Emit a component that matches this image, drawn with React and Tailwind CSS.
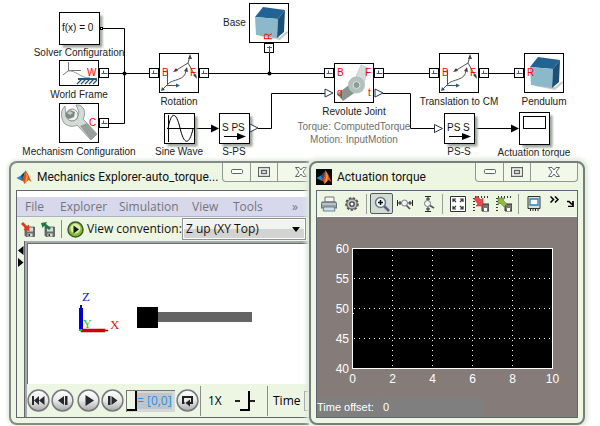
import React from 'react';

const INK = '#000000';
const RED = '#ff0000';

function Label({ x, y, children, fill = '#222222' }) {
  return (
    <text x={x} y={y} fontSize="10" textAnchor="middle" fill={fill}>
      {children}
    </text>
  );
}

function Block({ x, y, w = 39, h = 39, shadow = false }) {
  return (
    <g>
      {shadow && <rect x={x + 3} y={y + 3} width={w} height={h} fill="#9aa39a" filter="url(#soft)" />}
      <rect x={x} y={y} width={w} height={h} fill="#ffffff" stroke={INK} />
    </g>
  );
}

function Port({ x, y }) {
  return (
    <g>
      <rect x={x} y={y} width="9" height="9" fill="#ffffff" stroke={INK} />
      <path d={`M${x + 2} ${y + 5}h6M${x + 4} ${y + 2}v3`} stroke="#44597a" fill="none" />
    </g>
  );
}

function OpenArrow({ x, y }) {
  return <path d={`M${x} ${y - 4}L${x + 8} ${y}L${x} ${y + 4}Z`} fill="#ffffff" stroke="#2b3550" />;
}

function Transform({ x, y }) {
  return (
    <g fill="none">
      <path d={`M${x + 8.5} ${y + 17}v15.500h11M${x + 8} ${y + 32}l-5 5`} stroke="#2d587f" />
      <path d={`M${x + 21} ${y + 32.5}l-4 -2v4zM${x + 2} ${y + 38}l1 -4l3 3z`} fill="#2d587f" />
      <path d={`M${x + 9} ${y + 31}C${x + 13} ${y + 26} ${x + 27} ${y + 28} ${x + 27} ${y + 17}`} stroke="#555555" />
      <path d={`M${x + 28} ${y + 14}l-3 4l4 1z`} fill="#444444" />
      <path d={`M${x + 16} ${y + 18}L${x + 29} ${y + 10}L${x + 31} ${y + 3}M${x + 29} ${y + 10}L${x + 37} ${y + 24}`} stroke="#555555" />
      <path d={`M${x + 14} ${y + 19}l3 -4l2 3zM${x + 31} ${y + 1}l-2 5l4 0zM${x + 38} ${y + 26}l-4 -4l3 -1z`} fill="#444444" />
    </g>
  );
}

function Cube({ x, y }) {
  return (
    <g>
      <path d={`M${x + 3} ${y + 25}l22 5l7 -6l1 2l-8 7l-20 -4z`} fill="#c8cdc8" />
      <path d={`M${x} ${y + 10}L${x + 8} ${y}L${x + 30} ${y + 3}L${x + 23} ${y + 12}Z`} fill="#236394" />
      <path d={`M${x} ${y + 10}L${x + 23} ${y + 12}L${x + 22} ${y + 31}L${x + 1} ${y + 28}Z`} fill="#8bb9c9" />
      <path d={`M${x + 23} ${y + 12}L${x + 30} ${y + 3}L${x + 29} ${y + 25}L${x + 22} ${y + 31}Z`} fill="#1b5078" />
    </g>
  );
}

function Diagram() {
  return (
    <svg viewBox="0 0 600 161" className="block w-full" fontFamily='"Liberation Sans", Arial, sans-serif' role="img" aria-label="Block diagram">
      <defs>
        <filter id="soft" x="-20%" y="-20%" width="150%" height="150%">
          <feGaussianBlur stdDeviation="1.3" />
        </filter>
      </defs>

      <g fill="none" stroke={INK}>
        <path d="M103 28.5H124.5V123.5H104M104 73.5H154" />
        <path d="M204 73.5H329M269.5 48V73" />
        <path d="M379 73.5H434M484 73.5H519" />
        <path d="M195 128.5H213M258 128.5H271.5V93.5H325" />
        <path d="M383 93.5H410.5V128.5H434M475 128.5H512" />
      </g>
      <circle cx="124.5" cy="73.5" r="2" />
      <circle cx="269.5" cy="73.5" r="2" />
      <path d="M211 124.500L219 128.500L211 132.500ZM511 124.500L519 128.500L511 132.500Z" />

      <Block x={59.5} y={12.5} w={40} h={32} shadow />
      <rect x="100.500" y="27.500" width="2" height="2" fill="#ffffff" stroke={INK} />
      <text x="62" y="31" fontSize="10" fill="#111111">f(x) = 0</text>
      <Label x={79} y={56}>Solver Configuration</Label>

      <Block x={59.5} y={60.5} h={25} />
      <path d="M68.500 62V71M68 70.500H81M68 71L63 75" stroke="#777777" fill="none" />
      <path d="M68 71C76 70 80 78 90 78" stroke="#999999" fill="none" />
      <path d="M78 79H97" stroke="#24547c" strokeWidth="2" />
      <path d="M82 79L77 84M86 79L81 84M90 79L85 84M94 79L89 84M97 80L93 84" stroke="#24547c" strokeWidth="1.300" />
      <text x="87" y="76" fontSize="10" fill={RED}>W</text>
      <Port x={99.5} y={68.5} />
      <Label x={79} y={98}>World Frame</Label>

      <Block x={59.5} y={103.5} />
      <path d="M65 106C61 109 60 117 64 123C68 127 74 127 77 125L91 140L97 134L83 119C86 114 85 107 79 105L76 105L79 112L77 119L71 121L66 117Z" fill="#d3dcd6" stroke="#7f8985" strokeWidth="0.800" />
      <path d="M80 126L91 140L97 134L87 123Z" fill="#989f9d" />
      <circle cx="72" cy="115" r="6" fill="#eef1ee" stroke="#8b9491" />
      <path d="M66 113L70 110L75 112L74 117L69 119L66 117Z" fill="#7f8784" />
      <path d="M67 113L70 111L73 113L70 115Z" fill="#c5cbc7" />
      <text x="89" y="126" fontSize="10" fill={RED}>C</text>
      <Port x={99.5} y={118.5} />
      <Label x={79} y={155}>Mechanism Configuration</Label>

      <Block x={159.5} y={53.5} />
      <Transform x={159} y={53} />
      <text x="162" y="76" fontSize="10" fill={RED}>B</text>
      <text x="190" y="76" fontSize="10" fill={RED}>F</text>
      <Port x={149.5} y={68.5} />
      <Port x={199.5} y={68.5} />
      <Label x={179} y={105}>Rotation</Label>

      <Label x={234.5} y={26}>Base</Label>
      <Block x={249.5} y={3.5} />
      <Cube x={255} y={7} />
      <text x="0" y="0" fontSize="10" fill={RED} transform="translate(272 40) rotate(-90)">R</text>
      <rect x="264.500" y="43.500" width="9" height="9" fill="#ffffff" stroke={INK} />
      <path d="M269.500 46V53M267 47.500H272" stroke="#44597a" />

      <Block x={334.5} y={63.5} />
      <path d="M361 65L368 68L363 87L353 83Z" fill="#d4ded9" stroke="#a9b7b1" strokeWidth="0.500" />
      <path d="M337 94L353 82L360 89L343 101Z" fill="#87958f" />
      <circle cx="356.500" cy="85" r="8.500" fill="#b3c0bb" />
      <circle cx="356.500" cy="85" r="3.500" fill="#8d9c98" stroke="#dce4e0" />
      <text x="337" y="76" fontSize="10" fill={RED}>B</text>
      <text x="365" y="76" fontSize="10" fill={RED}>F</text>
      <text x="337" y="96" fontSize="10" fill={RED}>q</text>
      <text x="368" y="96" fontSize="10" fill={RED}>t</text>
      <Port x={324.5} y={68.5} />
      <Port x={374.5} y={68.5} />
      <OpenArrow x={325} y={93} />
      <OpenArrow x={375} y={93} />
      <Label x={354} y={115}>Revolute Joint</Label>
      <Label x={354} y={130} fill="#707070">Torque: ComputedTorque</Label>
      <Label x={354} y={143} fill="#707070">Motion: InputMotion</Label>

      <Block x={439.5} y={53.5} />
      <Transform x={439} y={53} />
      <text x="442" y="76" fontSize="10" fill={RED}>B</text>
      <text x="470" y="76" fontSize="10" fill={RED}>F</text>
      <Port x={429.5} y={68.5} />
      <Port x={479.5} y={68.5} />
      <Label x={459} y={105}>Translation to CM</Label>

      <Block x={524.5} y={53.5} />
      <Cube x={530} y={57} />
      <text x="527" y="76" fontSize="10" fill={RED}>R</text>
      <Port x={514.5} y={68.5} />
      <Label x={544} y={105}>Pendulum</Label>

      <Block x={164.5} y={113.5} w={30} h={30} shadow />
      <path d="M168.500 115V142M167 128.500H195" stroke={INK} />
      <path d="M168 129C171 111 176 111 180 128S189 146 193 129" fill="none" stroke={INK} />
      <Label x={179} y={155}>Sine Wave</Label>

      <Block x={219.5} y={113.5} w={30} h={30} shadow />
      <text x="222" y="131" fontSize="10" fill="#111111">S PS</text>
      <path d="M224 136.500H239" stroke={INK} />
      <path d="M237 133L246 136.500L237 140Z" />
      <OpenArrow x={250} y={128} />
      <Label x={234} y={155}>S-PS</Label>

      <Block x={444.5} y={113.5} w={30} h={30} shadow />
      <text x="447" y="131" fontSize="10" fill="#111111">PS S</text>
      <path d="M449 136.500H464" stroke={INK} />
      <path d="M462 133L471 136.500L462 140Z" />
      <OpenArrow x={434.5} y={128.5} />
      <Label x={459} y={155}>PS-S</Label>

      <Block x={519.5} y={112.5} w={30} h={32} shadow />
      <rect x="523.500" y="116.500" width="22" height="12" fill="#ffffff" stroke={INK} />
      <Label x={534} y={156}>Actuation torque</Label>
    </svg>
  );
}

function Logo({ boxed }) {
  return (
    <svg viewBox="0 0 16 16" className="h-4 w-4 shrink-0" aria-hidden="true">
      {boxed && <rect width="16" height="16" fill="#070707" />}
      <path d="M0.500 9L5 6.500L9 2.500L7 10L5 11.500Z" fill="#2e83c0" />
      <path d="M5 6.500L9 2.500L7.500 8L6 10Z" fill="#174a79" />
      <path d="M5 11.500L7.500 8.500L9.500 1L12 5L15.500 13L12.500 11L8.500 15L7 12Z" fill="#d7551c" />
      <path d="M9.500 2L10.500 7L8.500 15L11 12L12 7Z" fill="#f7a23b" />
      <path d="M9.500 2L8 8L5.500 11.500L7 11Z" fill="#7b2015" />
    </svg>
  );
}

function CaptionButtons() {
  const cell = 'flex h-[18px] items-center justify-center border-[#8f9793]';
  return (
    <div className="flex shrink-0 self-start overflow-hidden rounded-b-[4px] border border-t-0 border-[#8f9793] bg-[#f2f9ea]">
      <button aria-label="Minimize" className={`${cell} w-[28px] border-r`}>
        <svg viewBox="0 0 12 6" className="h-[6px] w-3"><rect x=".5" y=".5" width="11" height="4" rx="1" fill="#fff" stroke="#5b6663" /></svg>
      </button>
      <button aria-label="Maximize" className={`${cell} w-[27px] border-r`}>
        <svg viewBox="0 0 12 10" className="h-[10px] w-3"><path d="M.5.5h11v9H.5zM3.500 3.500h5v3h-5z" fill="#fff" stroke="#5b6663" strokeWidth="1.300" /></svg>
      </button>
      <button aria-label="Close" className={`${cell} w-[46px]`}>
        <svg viewBox="0 0 12 10" className="h-[10px] w-3"><path d="M.5.5H4L6 3L8 .5H11.500L8 5L11.500 9.500H8L6 7L4 9.500H.5L4 5Z" fill="#fff" stroke="#5b6663" /></svg>
      </button>
    </div>
  );
}

function SaveIcon({ green }) {
  return (
    <svg viewBox="0 0 14 15" className="h-[15px] w-[14px]" aria-hidden="true">
      <path d="M4 5h9.500v9.500H5L4 13.500z" fill="#6b6e70" stroke="#44474a" strokeWidth=".7" />
      <path d="M6 5.500h6v4H6zM6.500 11.500h5v3h-5z" fill="#d6d9da" />
      <path d="M7.500 12h1.500v2h-1.500z" fill="#333" />
      {green ? (
        <path d="M0 1L6 0L5 2L10 6L8 8L3 4L1.500 6Z" fill="#177c47" />
      ) : (
        <path d="M0 2L2 0L6 4L8 2.500L8.500 9L2.500 8L4 6Z" fill="#dc3c20" />
      )}
    </svg>
  );
}

const glyphs = {
  first: <path d="M5 7h2v9H5zM12 7v9l-5-4.500zM17.500 7v9L12 11.500z" />,
  back: <path d="M13 7v9l-6-4.500zM14 7h2.500v9H14z" />,
  play: <path d="M8.500 6v11l8.500-5.500z" />,
  forward: <path d="M7 7h2.500v9H7zM10.500 7v9l6-4.500z" />,
  loop: <path d="M8.500 14H7V8h9v6h-3" fill="none" stroke="#222" strokeWidth="2" />,
};

function RoundButton({ kind, label }) {
  return (
    <button aria-label={label} className="h-[23px] w-[23px] shrink-0">
      <svg viewBox="0 0 23 23" className="h-full w-full">
        <defs>
          <linearGradient id={`g-${kind}`} x1="0" y1="0" x2="0" y2="1">
            <stop offset="0" stopColor="#ffffff" />
            <stop offset=".5" stopColor="#e9e9e9" />
            <stop offset="1" stopColor="#a9a9a9" />
          </linearGradient>
        </defs>
        <circle cx="11.500" cy="11.500" r="10.400" fill={`url(#g-${kind})`} stroke="#777b7d" strokeWidth="1.500" />
        <g fill="#252a2c">{glyphs[kind]}</g>
        {kind === 'loop' && <path d="M14 10.500v7L9.500 14z" fill="#222" />}
      </svg>
    </button>
  );
}

function Explorer() {
  return (
    <section className="flex min-w-0 flex-1 flex-col overflow-hidden rounded-l-[8px] border-2 border-r-0 border-[#85898a] bg-[#ecf6e3] pb-[5px] pl-[5px] shadow-[0_0_3px_2px_#e3eedd]">
      <header className="flex h-[27px] shrink-0 items-center gap-[5px]">
        <Logo />
        <h2 className="w-[180px] shrink-0 whitespace-nowrap font-['Roboto','Open_Sans',sans-serif] text-[12px] leading-[16px] text-[#111]">Mechanics Explorer-auto_torque...</h2>
        <CaptionButtons />
      </header>
      <div className="flex min-h-0 flex-1 flex-col border-y border-l border-[#60656f]">
        <div className="h-[6px] shrink-0 bg-white" />
        <nav className="flex h-[20px] shrink-0 items-center border-b border-[#aeb0c4] bg-[#d7d8ec] pl-2 text-[12px] leading-[16px] text-[#74757c]">
          <button className="w-[35px] text-left">File</button>
          <button className="w-[59px] text-left">Explorer</button>
          <button className="w-[73px] text-left">Simulation</button>
          <button className="w-[41px] text-left">View</button>
          <button className="w-[59px] text-left">Tools</button>
          <button aria-label="More menus">»</button>
        </nav>
        <div className="flex h-[24px] shrink-0 items-center pl-1">
          <button aria-label="Import" className="w-[20px]"><SaveIcon /></button>
          <button aria-label="Export" className="w-[20px]"><SaveIcon green /></button>
          <span className="mr-[5px] h-[18px] w-px bg-[#8b8e88]" />
          <button aria-label="Run" className="mr-[3px] h-[17px] w-[17px] shrink-0">
            <svg viewBox="0 0 17 17" className="h-full w-full">
              <circle cx="8.500" cy="8.500" r="7.500" fill="#8cbc3d" stroke="#3f5d2a" strokeWidth="1.500" />
              <circle cx="8.500" cy="7.500" r="5" fill="#d7efa9" />
              <path d="M6.500 4.500v8l5.500-4z" fill="#152010" />
            </svg>
          </button>
          <label htmlFor="view" className="w-[95px] shrink-0 whitespace-nowrap text-[12px] leading-[16px] text-[#111]">View convention:</label>
          <div className="relative w-[124px] shrink-0">
            <select id="view" className="block h-[22px] w-full appearance-none border border-[#8f9292] bg-gradient-to-b from-[#f1f3ef] from-50% to-[#d3d4d1] to-50% px-[3px] text-[12px] leading-[16px] text-[#111] shadow-[inset_0_0_0_1px_#fff]">
              <option>Z up (XY Top)</option>
            </select>
            <svg viewBox="0 0 8 5" className="pointer-events-none absolute right-[6px] top-[9px] h-[5px] w-2"><path d="M0 0h8L4 5z" /></svg>
          </div>
        </div>
        <div className="flex min-h-0 flex-1">
          <div className="w-[8px] shrink-0 border-r border-[#60656f] pt-[4px]">
            <svg viewBox="0 0 7 24" className="h-6 w-full"><path d="M6.500 1v9L1 5.500zM1 13v9l5.500-4.500z" /></svg>
          </div>
          <div className="flex min-w-0 flex-1 flex-col border-l-2 border-t-2 border-[#a6a9ac]">
            <div className="flex min-h-0 flex-1 border-l border-t border-[#6a6d70] bg-white">
              <svg viewBox="0 0 280 138" className="h-full w-[280px] shrink-0" role="img" aria-label="Pendulum view">
                <g fontFamily='"Liberation Serif", serif' fontSize="13">
                  <text x="54" y="56" fill="#1414d0">Z</text>
                  <text x="55" y="83" fill="#15c815" fontSize="12">Y</text>
                  <text x="82" y="84" fill="#d81414">X</text>
                </g>
                <path d="M51 63h4v21h-4zM52 60h2v4h-2z" fill="#0000d8" />
                <path d="M53 84h24v3H53zM77 85h3v1h-3z" fill="#d40000" stroke="#a00000" strokeWidth=".5" />
                <path d="M51 84h3v2h-3z" fill="#10c810" />
                <rect x="109" y="67" width="115" height="10" fill="#646464" />
                <rect x="109" y="62" width="21" height="21" fill="#000" />
              </svg>
            </div>
            <div className="flex h-[33px] shrink-0 items-center">
              <RoundButton kind="first" label="Go to start" />
              <div className="ml-px flex"><RoundButton kind="back" label="Step back" /></div>
              <div className="ml-[3px] flex"><RoundButton kind="play" label="Play" /></div>
              <div className="ml-px flex"><RoundButton kind="forward" label="Step forward" /></div>
              <div className="ml-[2px] flex h-[22px] w-[49px] shrink-0 items-center border-l border-t border-[#777] bg-[#d3d8d8]">
                <input aria-label="Position" type="range" defaultValue="0" className="h-[20px] w-[10px] shrink-0 appearance-none bg-[#ecf6e3] [&::-webkit-slider-thumb]:h-[20px] [&::-webkit-slider-thumb]:w-[10px] [&::-webkit-slider-thumb]:appearance-none [&::-webkit-slider-thumb]:border-b-2 [&::-webkit-slider-thumb]:border-r-2 [&::-webkit-slider-thumb]:border-black [&::-webkit-slider-thumb]:bg-[#ecf6e3]" />
                <output className="whitespace-nowrap bg-[#bfc5ca] text-[12px] leading-[16px] text-[#3090e8]">= [0,0]</output>
              </div>
              <div className="ml-px flex"><RoundButton kind="loop" label="Loop" /></div>
              <span className="ml-px h-[30px] w-px shrink-0 bg-[#8b8e88]" />
              <label htmlFor="speed" className="ml-[7px] w-[27px] shrink-0 text-[12px] leading-[16px]">1X</label>
              <input id="speed" type="range" className="h-[20px] w-[20px] shrink-0 appearance-none bg-[linear-gradient(#222,#222)] bg-[length:20px_2px] bg-center bg-no-repeat [&::-webkit-slider-thumb]:h-[20px] [&::-webkit-slider-thumb]:w-[10px] [&::-webkit-slider-thumb]:appearance-none [&::-webkit-slider-thumb]:border-b-2 [&::-webkit-slider-thumb]:border-r-2 [&::-webkit-slider-thumb]:border-black [&::-webkit-slider-thumb]:bg-[#f2f9ea]" />
              <span className="ml-3 h-[30px] w-px shrink-0 bg-[#8b8e88]" />
              <label htmlFor="time" className="ml-[5px] w-[31px] shrink-0 text-[12px] leading-[16px]">Time</label>
              <input id="time" className="h-[20px] w-[40px] shrink-0 border border-[#999]" />
            </div>
          </div>
        </div>
      </div>
    </section>
  );
}

const tools = {
  print: (
    <>
      <path d="M4 1h9v5H4z" fill="#f4f4f4" stroke="#777" />
      <path d="M1 6h14l1 6H0z" fill="#96a0a8" stroke="#5e666c" />
      <path d="M1 8h14" stroke="#dde3e7" />
      <path d="M3 11h10l1 4H2z" fill="#cbe2ee" stroke="#76838b" />
    </>
  ),
  gear: (
    <>
      <circle cx="8" cy="8" r="5.800" fill="#aaa" stroke="#555" strokeWidth="2" strokeDasharray="2.500 1.400" />
      <circle cx="8" cy="8" r="5" fill="#c5c5c5" stroke="#6a6a6a" />
      <circle cx="8" cy="8" r="2.200" fill="#fff" stroke="#444" strokeWidth="1.300" />
    </>
  ),
  zoom: (
    <>
      <path d="M10 10l5 5" stroke="#5c5c88" strokeWidth="2.500" />
      <circle cx="6.500" cy="6.500" r="5" fill="#eef7fb" stroke="#697984" strokeWidth="1.500" />
      <path d="M4 6.500h5M6.500 4v5" stroke="#111" strokeWidth="1.500" />
    </>
  ),
  zoomX: (
    <>
      <path d="M.5 4v6M15.500 4v6M1 7h4M11 7h4M3 5v4M13 5v4" stroke="#222" />
      <path d="M9 9l4 4" stroke="#555" strokeWidth="1.700" />
      <circle cx="7.500" cy="7" r="3" fill="#eef7fb" stroke="#777" />
    </>
  ),
  zoomY: (
    <>
      <path d="M5 .5h6M5 15.500h6M8 1v4M8 11v4M6 3h4M6 13h4" stroke="#222" />
      <path d="M9 9l5 3" stroke="#555" strokeWidth="1.700" />
      <circle cx="7.500" cy="7.500" r="3" fill="#eef7fb" stroke="#777" />
    </>
  ),
  fit: (
    <>
      <path d="M.5.5h15v15H.5z" fill="#fff" stroke="#333" />
      <path d="M3 6V3h3M3 3l3 3M10 3h3v3M13 3l-3 3M3 10v3h3M3 13l3-3M13 10v3h-3M13 13l-3-3" fill="none" stroke="#334" strokeWidth="1.200" />
    </>
  ),
  restore: (
    <>
      <path d="M1 15V1h15" fill="none" stroke="#333" strokeWidth="2" strokeDasharray="1 2" />
      <path d="M9 8h7v7H9z" fill="#777" stroke="#333" />
      <path d="M11 12h3v3h-3z" fill="#fff" />
      <path d="M1 3l3-3l4 4l2-2v8H3l2-2z" fill="#e8494b" stroke="#a02228" strokeWidth=".5" />
    </>
  ),
  save: (
    <>
      <path d="M1 15V1h15" fill="none" stroke="#333" strokeWidth="2" strokeDasharray="1 2" />
      <path d="M9 8h7v7H9z" fill="#777" stroke="#333" />
      <path d="M11 12h3v3h-3z" fill="#fff" />
      <path d="M2 2h7L7 4l4 4l-3 3l-4-4l-2 2z" fill="#8fb848" stroke="#4d7223" strokeWidth=".5" />
    </>
  ),
  scope: (
    <>
      <path d="M2 .5h12v12H2z" fill="#ddd" stroke="#333" />
      <path d="M4 3h8v6H4z" fill="#fff" stroke="#2385c2" strokeWidth="1.300" />
      <path d="M4.500 13v2M7 13v2M9.500 13v2M12 13v2" stroke="#222" />
    </>
  ),
};

function Tool({ name, label, pressed }) {
  return (
    <button
      aria-label={label}
      className={`flex h-[21px] w-[23px] shrink-0 items-center justify-center rounded-[2px] ${pressed ? 'border border-[#555b5b] bg-[#d3dcd4]' : ''}`}
    >
      <svg viewBox="0 0 16 16" className="h-4 w-4 shrink-0">{tools[name]}</svg>
    </button>
  );
}

function Divider() {
  return <span className="mx-[3px] h-[20px] w-px shrink-0 bg-[#9a9d9a]" />;
}

function Plot() {
  return (
    <svg viewBox="0 0 260 181" className="block w-full" fontFamily='"Liberation Sans", Arial, sans-serif' fontSize="12" fill="#ffffff" role="img" aria-label="Actuation torque plot">
      <rect x="35.500" y="31.500" width="200" height="120" fill="#000" stroke="#fff" />
      <g stroke="#fff" strokeDasharray="1 4">
        {[61.5, 91.5, 121.5].map((y) => <path key={y} d={`M37 ${y}H235`} />)}
        {[75.5, 115.5, 155.5, 195.5].map((x) => <path key={x} d={`M${x} 33V151`} />)}
      </g>
      <path d="M36 96.500h1" stroke="#ff0" />
      {[60, 55, 50, 45, 40].map((n, i) => (
        <text key={n} x="32" y={36 + i * 30} textAnchor="end">{n}</text>
      ))}
      {[0, 2, 4, 6, 8, 10].map((n, i) => (
        <text key={n} x={35.5 + i * 40} y="166" textAnchor="middle">{n}</text>
      ))}
    </svg>
  );
}

function Scope() {
  return (
    <section className="flex w-[276px] shrink-0 flex-col rounded-[8px] border-2 border-[#777c7c] bg-[#ecf6e3] px-[5px] pb-[5px] shadow-[0_0_4px_3px_#dfeadb]">
      <header className="flex h-[27px] shrink-0 items-center gap-[5px]">
        <Logo boxed />
        <h2 className="flex-1 whitespace-nowrap font-['Roboto','Open_Sans',sans-serif] text-[12px] leading-[16px] text-[#111]">Actuation torque</h2>
        <CaptionButtons />
      </header>
      <div className="flex flex-1 flex-col border border-[#5f6773] bg-[#857c79]">
        <div className="flex h-[26px] shrink-0 items-center overflow-hidden border-b border-white bg-[#ecf6e3]">
          <Tool name="print" label="Print" />
          <Tool name="gear" label="Parameters" />
          <Divider />
          <Tool name="zoom" label="Zoom" pressed />
          <Tool name="zoomX" label="Zoom X-axis" />
          <Tool name="zoomY" label="Zoom Y-axis" />
          <Divider />
          <Tool name="fit" label="Autoscale" />
          <Tool name="restore" label="Restore axes" />
          <Tool name="save" label="Save axes" />
          <Divider />
          <Tool name="scope" label="Floating scope" />
          <button aria-label="More tools" className="w-[18px] shrink-0 pb-2">
            <svg viewBox="0 0 9 7" className="mx-auto h-[7px] w-[9px]"><path d="M.5.5l3 3l-3 3M5 .5l3 3l-3 3" fill="none" stroke="#000" strokeWidth="1.500" /></svg>
          </button>
          <button aria-label="Dock" className="w-[13px] shrink-0">
            <svg viewBox="0 0 8 7" className="mx-auto h-[7px] w-2"><path d="M1 1.500h2l3 3M7 1v5.500H2" fill="none" stroke="#000" strokeWidth="1.700" /></svg>
          </button>
        </div>
        <Plot />
        <div className="flex flex-1 gap-[2px] font-['Liberation_Sans',Arial,sans-serif] text-[11px] leading-[18px] text-white">
          <span className="w-[64px] bg-[#7e7f7e]">Time offset:</span>
          <output className="w-[100px] bg-[#7e7f7e]">0</output>
        </div>
      </div>
    </section>
  );
}

export default function App() {
  return (
    <main className="flex min-h-screen flex-col overflow-hidden bg-white font-['Open_Sans','Noto_Sans',sans-serif]">
      <Diagram />
      <div className="flex h-[264px] pl-[9px] pr-[15px]">
        <Explorer />
        <Scope />
      </div>
    </main>
  );
}
